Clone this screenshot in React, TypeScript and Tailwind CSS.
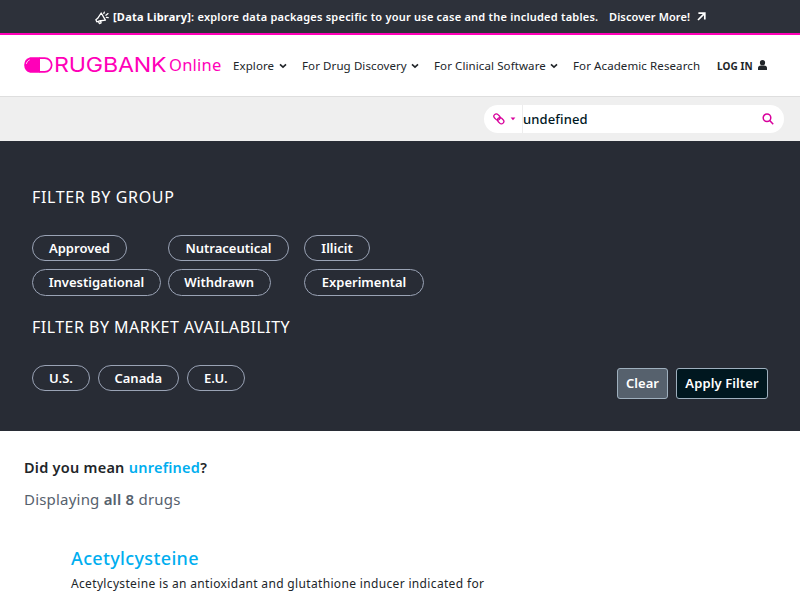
import React from "react";

function Chevron() {
  return (
    <svg width="8" height="6" viewBox="0 0 8 6" fill="none" stroke="currentColor" strokeWidth="1.6">
      <path d="M1 1.3 4 4.2 7 1.3" />
    </svg>
  );
}

function Megaphone() {
  return (
    <svg width="15" height="14" viewBox="0 0 15 14" fill="none" stroke="currentColor" strokeWidth="1.3" strokeLinejoin="round" strokeLinecap="round">
      <path d="M6.2 2 10.4 9.2 4.2 10 1.8 10.8 .9 8.8 2.7 7.3Z" />
      <path d="M3.4 10.4 4.4 12.6 6.1 12 5.6 10" />
      <path d="M8.8 2.5 9.3 1.1M10.9 4.2 13 2.6M11.4 6.3 13.2 6.6" />
    </svg>
  );
}

function Logo() {
  return (
    <a className="flex h-6 w-[199px] items-center text-[#ff00b8]">
      <svg className="shrink-0" width="29" height="16" viewBox="0 0 29 16">
        <path d="M6.2 .2H14.6Q16 .2 16 1.6V14.4Q16 15.8 14.6 15.8H6.2Q.2 14 .2 8 .2 2 6.2 .2Z" fill="currentColor" />
        <path d="M15 1.1H20.8A6.9 6.9 0 0 1 20.8 14.9H15" fill="none" stroke="currentColor" strokeWidth="1.7" />
        <path d="M2.4 6.8C2.9 5 3.8 3.8 5.6 2.9" fill="none" stroke="white" strokeWidth=".9" />
      </svg>
      <span className="w-[116px] shrink-0 pl-[1px]">
        <span className="inline-block origin-left scale-x-[1.13] font-['Inter',sans-serif] text-[20.5px] leading-6 font-normal tracking-[-0.15px]">RUGBANK</span>
      </span>
      <span className="text-[16.5px] leading-6 tracking-[0.25px]">Online</span>
    </a>
  );
}

function Pill({ label, width }: { label: string; width: string }) {
  return (
    <button className={`h-[26.5px] rounded-full border border-[#9aa3b5] text-center text-[13px] leading-[25px] font-semibold whitespace-nowrap text-white ${width}`}>
      {label}
    </button>
  );
}

export default function App() {
  return (
    <div className="h-[600px] w-[800px] overflow-hidden bg-white font-['Noto_Sans',sans-serif] whitespace-nowrap text-[#212529]">
      <div className="flex h-[35px] items-center border-b-2 border-[#ff00b8] bg-[#2d313a] pt-[2px] pl-[95px] text-[11px] font-semibold text-white">
        <div className="w-[18px]"><Megaphone /></div>
        <div className="w-[496px] tracking-[0.22px]"><b className="font-bold">[Data Library]</b>: explore data packages specific to your use case and the included tables.</div>
        <div className="w-[87.5px] tracking-[0.1px]">Discover More!</div>
        <svg className="mb-[2px]" width="9" height="9" viewBox="0 0 9 9" fill="none" stroke="currentColor" strokeWidth="1.7"><path d="M1 8 7.6 1.4M1.4 1.2H7.8V7.6" /></svg>
      </div>

      <header className="flex h-[62px] items-center border-b border-[#dedede] pl-6 text-[11.5px] tracking-[0.1px]">
        <div className="w-[209px] pb-[2px]"><Logo /></div>
        <div className="flex w-[69px] items-center"><span className="w-[46px]">Explore</span><Chevron /></div>
        <div className="flex w-[132px] items-center"><span className="w-[109px]">For Drug Discovery</span><Chevron /></div>
        <div className="flex w-[139px] items-center"><span className="w-[116px]">For Clinical Software</span><Chevron /></div>
        <div className="w-[144px]">For Academic Research</div>
        <div className="w-[40.5px] pt-px text-[10px] font-bold">LOG IN</div>
        <svg className="mb-[2px]" width="9" height="10" viewBox="0 0 9 10" fill="currentColor"><circle cx="4.5" cy="2.7" r="2.6" /><path d="M0 10V8Q0 6 3 5.6H6Q9 6 9 8V10Z" /></svg>
      </header>

      <div className="flex h-11 items-center justify-end bg-[#efefef] pr-4">
        <div className="flex h-7 w-[300px] items-center rounded-full bg-white pr-[10px] pl-[9px] text-[#d8009c]">
          <svg width="12" height="12" viewBox="0 0 12 12" fill="none" stroke="currentColor" strokeWidth="1.3">
            <rect x="-3.4" y="-2.4" width="6.8" height="4.8" rx="2.4" transform="translate(4 4) rotate(45)" />
            <rect x="-3.4" y="-2.4" width="6.8" height="4.8" rx="2.4" transform="translate(7.7 7.7) rotate(45)" />
          </svg>
          <svg className="mr-[6px] ml-[5px]" width="6" height="4" viewBox="0 0 6 4"><path d="M.6 .5H5.4L3 3.2Z" fill="currentColor" /></svg>
          <div className="h-7 flex-1 border-l border-[#ededed] text-[13px] leading-7 font-medium tracking-[0.12px] text-[#00171f]">undefined</div>
          <svg width="12" height="12" viewBox="0 0 12 12" fill="none" stroke="currentColor" strokeWidth="1.5"><circle cx="5" cy="4.8" r="3.8" /><path d="M7.7 7.6 11.2 11.2" /></svg>
        </div>
      </div>

      <section className="h-[290px] bg-[#282c35] px-8 pt-11 text-white">
        <h2 className="h-[49.5px] text-[16px] leading-6 tracking-[0.65px]">FILTER BY GROUP</h2>
        <div className="grid grid-cols-[136px_136px_136px] gap-y-[8px]">
          <Pill label="Approved" width="w-[95px]" />
          <Pill label="Nutraceutical" width="w-[121px]" />
          <Pill label="Illicit" width="w-[66px]" />
          <Pill label="Investigational" width="w-[129px]" />
          <Pill label="Withdrawn" width="w-[102.5px]" />
          <Pill label="Experimental" width="w-[120px]" />
        </div>
        <h2 className="mt-[19.5px] h-[49.5px] text-[16px] leading-6 tracking-[0.48px]">FILTER BY MARKET AVAILABILITY</h2>
        <div className="flex items-start">
          <div className="flex flex-1 gap-2">
            <Pill label="U.S." width="w-[58px]" />
            <Pill label="Canada" width="w-[80.5px]" />
            <Pill label="E.U." width="w-[58.5px]" />
          </div>
          <div className="mt-[3px] flex gap-2 text-[13px] font-semibold">
            <button className="h-[31px] w-[51px] rounded-[3px] border border-[#9fb0be] bg-[#56616d] pt-[2px]">Clear</button>
            <button className="h-[31px] w-[92px] rounded-[3px] border border-[#9fb0be] bg-[#00171f] pt-[2px] tracking-[0.1px]">Apply Filter</button>
          </div>
        </div>
      </section>

      <main className="pt-6 pl-6">
        <p className="h-8 text-[14.5px] leading-6 font-semibold tracking-[0.25px]">Did you mean <span className="text-[#00aeef]">unrefined</span>?</p>
        <p className="text-[15px] leading-6 tracking-[0.2px] text-[#56616d]">Displaying <b className="font-semibold">all 8</b> drugs</p>
        <article className="pt-[33px] pl-[47px]">
          <h3 className="text-[18px] leading-7 font-medium tracking-[0.35px] text-[#00aeef]">Acetylcysteine</h3>
          <p className="pt-[2px] text-[12px] leading-5 tracking-[0.34px]">Acetylcysteine is an antioxidant and glutathione inducer indicated for</p>
        </article>
      </main>
    </div>
  );
}
